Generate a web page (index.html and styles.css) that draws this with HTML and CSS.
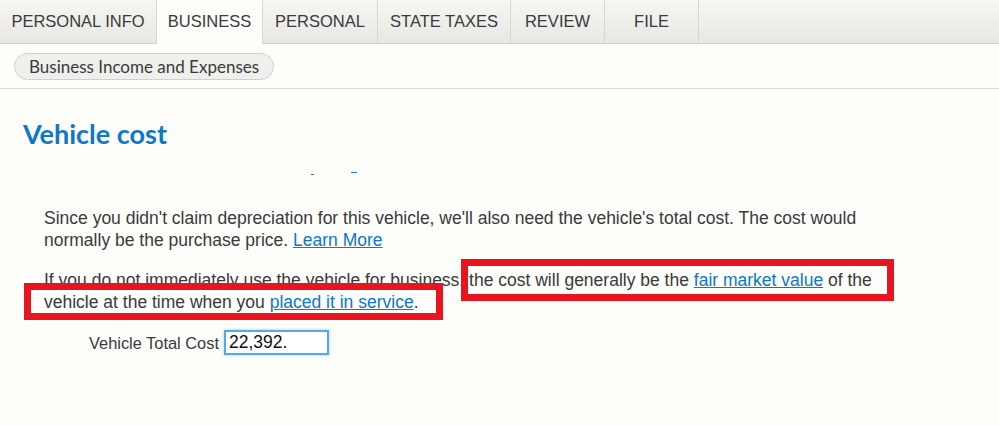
FILE: index.html
```html
<!DOCTYPE html>
<html>
<head>
<meta charset="utf-8">
<title>Vehicle cost</title>
<link rel="stylesheet" href="styles.css">
</head>
<body>
<ul class="tabs">
   <li class="tab t1">PERSONAL INFO</li>
   <li class="tab t2 active">BUSINESS</li>
   <li class="tab t3">PERSONAL</li>
   <li class="tab t4">STATE TAXES</li>
   <li class="tab t5">REVIEW</li>
   <li class="tab t6">FILE</li>
</ul>
<div class="subnav">
   <span class="pill">Business Income and Expenses</span>
</div>

<div class="main">
   <h1 class="title">Vehicle cost</h1>
   <div class="marks"><i class="m1"></i><i class="m2"></i></div>

   <div class="content">
      <p>Since you didn't claim depreciation for this vehicle, we'll also need the vehicle's total cost. The cost would normally be the purchase price. <a href="javascript:;">Learn More</a></p>
      <p>If you do not immediately use the vehicle for business, the cost will generally be the <a href="javascript:;">fair market value</a> of the vehicle at the time when you <a href="javascript:;">placed it in service</a>.</p>
      <div class="field">
         <label for="cost">Vehicle Total Cost</label>
         <input id="cost" type="text" value="22,392.">
      </div>
   </div>

   <!-- highlight boxes drawn over the text -->
   <div class="hl hl1"></div>
   <div class="hl hl2"></div>
</div>
</body>
</html>
```

FILE: styles.css
```css
*{margin:0;padding:0;list-style:none;box-sizing:border-box;}
body{background:#fdfdf9;font-family:"Liberation Sans",Arial,sans-serif;color:#393a3d;width:999px;height:425px;overflow:hidden;}

.tabs{display:flex;height:44px;background:linear-gradient(#f6f6f3,#e7e7e3);border-bottom:1px solid #d3d3cf;}
.tab{height:43px;line-height:43px;text-align:center;font-size:16.5px;color:#3a3a3c;border-right:1px solid #d6d6d2;}
.tab.active{background:#fdfdf9;height:44px;}
.t1{width:157px;}
.t2{width:106px;}
.t3{width:115px;}
.t4{width:133px;}
.t5{width:94px;}
.t6{width:94px;}

.subnav{height:45px;padding:9px 14px 0;border-bottom:1px solid #dcdcd8;}
.pill{display:inline-block;height:27px;line-height:25px;padding:0 14px;border:1px solid #cfcfcb;border-radius:14px;background:#efefeb;font-family:Lato,"Open Sans",sans-serif;font-size:17px;color:#393a3d;}

.main{position:relative;padding:28px 0 0 23px;}
.title{font-family:Lato,"Open Sans",sans-serif;font-weight:700;font-size:27px;line-height:34px;color:#0d77c8;}

.marks{position:relative;height:56px;}
.marks i{position:absolute;height:1px;background:#2a7fd4;}
.m1{left:288px;top:23px;width:3px;}
.m2{left:328px;top:21px;width:6px;}

.content{padding-left:21px;width:880px;font-size:17.5px;line-height:22px;}
.content p{margin-bottom:18px;}
.content a{color:#0d77c8;text-decoration:underline;}

.field{display:flex;align-items:center;padding-left:45px;margin-top:-1px;}
.field label{margin-right:5px;font-size:16.4px;}
.field input{width:105px;height:25px;border:2px solid #55a9ea;box-shadow:0 0 3px #9ccdf3;padding:0 3px;font-family:"Liberation Sans",Arial,sans-serif;font-size:17.5px;color:#111;background:#fff;}

.hl{position:absolute;border:7px solid #e8141f;}
.hl1{left:461px;top:170px;width:433px;height:42px;}
.hl2{left:24px;top:194px;width:419px;height:37px;}
```
